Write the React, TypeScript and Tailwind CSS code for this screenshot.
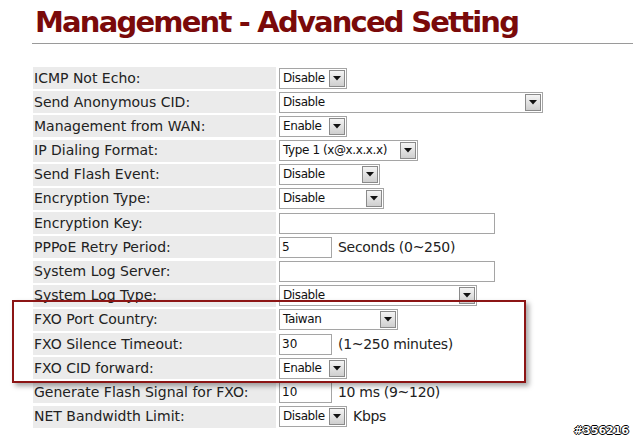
import React from "react";

type Field =
  | { kind: "select"; value: string; width: number; suffix?: string }
  | { kind: "input"; value: string; width: number; suffix?: string };

const rows: { label: string; field: Field }[] = [
  { label: "ICMP Not Echo:", field: { kind: "select", value: "Disable", width: 68 } },
  { label: "Send Anonymous CID:", field: { kind: "select", value: "Disable", width: 264 } },
  { label: "Management from WAN:", field: { kind: "select", value: "Enable", width: 68 } },
  { label: "IP Dialing Format:", field: { kind: "select", value: "Type 1 (x@x.x.x.x)", width: 139 } },
  { label: "Send Flash Event:", field: { kind: "select", value: "Disable", width: 101 } },
  { label: "Encryption Type:", field: { kind: "select", value: "Disable", width: 105 } },
  { label: "Encryption Key:", field: { kind: "input", value: "", width: 216 } },
  { label: "PPPoE Retry Period:", field: { kind: "input", value: "5", width: 53, suffix: "Seconds (0~250)" } },
  { label: "System Log Server:", field: { kind: "input", value: "", width: 216 } },
  { label: "System Log Type:", field: { kind: "select", value: "Disable", width: 198 } },
  { label: "FXO Port Country:", field: { kind: "select", value: "Taiwan", width: 119 } },
  { label: "FXO Silence Timeout:", field: { kind: "input", value: "30", width: 53, suffix: "(1~250 minutes)" } },
  { label: "FXO CID forward:", field: { kind: "select", value: "Enable", width: 68 } },
  { label: "Generate Flash Signal for FXO:", field: { kind: "input", value: "10", width: 53, suffix: "10 ms (9~120)" } },
  { label: "NET Bandwidth Limit:", field: { kind: "select", value: "Disable", width: 68, suffix: "Kbps" } },
];

function Select({ value, width }: { value: string; width: number }) {
  return (
    <div
      className="flex h-[21px] items-stretch border border-[#a5a5a5] bg-white"
      style={{ width }}
    >
      <span className="flex-1 overflow-hidden whitespace-nowrap pl-[3px] text-[12px] leading-[19px] tracking-[-0.4px] text-[#111]">
        {value}
      </span>
      <span className="m-[1px] flex w-[16px] items-center justify-center border border-[#8a8a8a] bg-gradient-to-b from-[#f4f4f4] to-[#cfcfcf]">
        <svg width="8" height="5" viewBox="0 0 8 5">
          <path d="M0 0 H8 L4 4.5 Z" fill="#111" />
        </svg>
      </span>
    </div>
  );
}

function Input({ value, width }: { value: string; width: number }) {
  return (
    <div
      className="h-[21px] border border-[#a5a5a5] bg-white pl-[2px] text-[12px] leading-[19px] text-[#111]"
      style={{ width }}
    >
      {value}
    </div>
  );
}

export default function App() {
  return (
    <div className="relative h-[443px] w-[633px] overflow-hidden bg-white font-['DejaVu_Sans',sans-serif]">
      {/* Title */}
      <h1 className="pl-[35px] pt-[3px] text-[29px] font-bold leading-[38px] tracking-[-1.8px] text-[#7a0a0a]">
        Management - Advanced Setting
      </h1>
      <div className="ml-[32px] mt-[2px] border-t border-[#9a9a9a]" />

      {/* Settings table */}
      <div className="ml-[33px] mt-[23px] flex flex-col gap-[2.2px]">
        {rows.map((r) => (
          <div key={r.label} className="flex h-[22px] items-center">
            <div className="flex h-full w-[243px] items-center bg-[#ebebeb] pl-[1px] text-[14px] text-[#222]">
              {r.label}
            </div>
            <div className="ml-[3px] flex items-center gap-[6px]">
              {r.field.kind === "select" ? (
                <Select value={r.field.value} width={r.field.width} />
              ) : (
                <Input value={r.field.value} width={r.field.width} />
              )}
              {r.field.suffix && (
                <span className="text-[14px] tracking-[-0.3px] text-[#222]">{r.field.suffix}</span>
              )}
            </div>
          </div>
        ))}
      </div>

      {/* Highlight box */}
      <div className="absolute left-[12px] top-[300px] h-[83px] w-[514px] border-2 border-[#8c1515] shadow-[3px_3px_5px_rgba(0,0,0,0.35)]" />

      {/* Watermark */}
      <div className="absolute bottom-[4px] right-[4px] text-[11px] font-bold text-white [text-shadow:1px_0_0_#000,-1px_0_0_#000,0_1px_0_#000,0_-1px_0_#000]">
        #356216
      </div>
    </div>
  );
}
